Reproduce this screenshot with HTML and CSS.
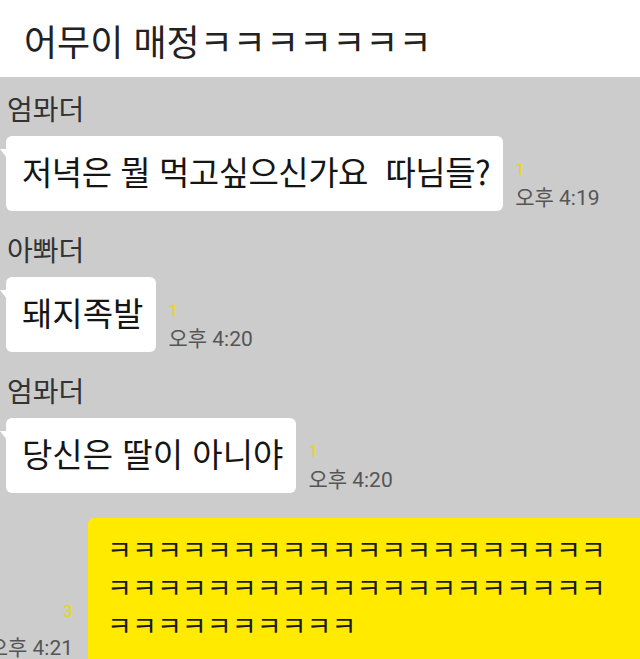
FILE: index.html
```html
<!DOCTYPE html>
<html lang="ko">
<head>
    <meta charset="UTF-8">
    <meta name="viewport" content="width=device-width, initial-scale=1.0">
    <title>어무이 매정</title>
    <link rel="stylesheet" href="styles.css">
</head>
<body>
    <header class="post-header">
        <h1 class="post-title">어무이 매정ㅋㅋㅋㅋㅋㅋㅋ</h1>
    </header>
    <main class="chat">
        <div class="msg-group">
            <div class="sender">엄뫄더</div>
            <div class="msg-row">
                <div class="bubble bubble-long">저녁은 뭘 먹고싶으신가요&nbsp; 따님들?</div>
                <div class="meta">
                    <span class="unread">1</span>
                    <span class="time">오후 4:19</span>
                </div>
            </div>
        </div>
        <div class="msg-group">
            <div class="sender">아뽜더</div>
            <div class="msg-row">
                <div class="bubble">돼지족발</div>
                <div class="meta">
                    <span class="unread">1</span>
                    <span class="time">오후 4:20</span>
                </div>
            </div>
        </div>
        <div class="msg-group">
            <div class="sender">엄뫄더</div>
            <div class="msg-row">
                <div class="bubble">당신은 딸이 아니야</div>
                <div class="meta">
                    <span class="unread">1</span>
                    <span class="time">오후 4:20</span>
                </div>
            </div>
        </div>
        <div class="msg-row msg-row-mine">
            <div class="meta meta-mine">
                <span class="unread">3</span>
                <span class="time">오후 4:21</span>
            </div>
            <div class="bubble-mine">ㅋㅋㅋㅋㅋㅋㅋㅋㅋㅋㅋㅋㅋㅋㅋㅋㅋㅋㅋㅋ<br>ㅋㅋㅋㅋㅋㅋㅋㅋㅋㅋㅋㅋㅋㅋㅋㅋㅋㅋㅋㅋ<br>ㅋㅋㅋㅋㅋㅋㅋㅋㅋㅋ</div>
        </div>
    </main>
</body>
</html>
```

FILE: styles.css
```css
:root {
    --chat-bg: #cccccc;
    --bubble-bg: #ffffff;
    --mine-bg: #ffea00;
    --text-color: #151515;
    --meta-color: #555555;
    --unread-color: #e6d628;
}

* {
    margin: 0;
    padding: 0;
    box-sizing: border-box;
}

body {
    width: 640px;
    height: 659px;
    overflow: hidden;
    background: var(--chat-bg);
    font-family: 'Noto Sans CJK KR', 'Noto Sans', sans-serif;
    color: var(--text-color);
}

.post-header {
    height: 77px;
    background: #ffffff;
    padding: 16px 0 0 24px;
}

.post-title {
    font-size: 36px;
    font-weight: 400;
    line-height: 48px;
    color: #222222;
}

.chat {
    padding-top: 13px;
}

.msg-group {
    margin-bottom: 20px;
}

.sender {
    font-size: 28px;
    line-height: 36px;
    padding-left: 7px;
    margin-bottom: 10px;
    color: #333333;
}

.msg-row {
    display: flex;
    align-items: flex-end;
    gap: 12px;
}

.bubble {
    position: relative;
    margin-left: 6px;
    height: 75px;
    padding: 0 13px 0 16px;
    background: var(--bubble-bg);
    border-radius: 6px;
    font-size: 33px;
    line-height: 71px;
    white-space: nowrap;
}

.bubble-long {
    letter-spacing: -0.5px;
}

/* little tail on the left */
.bubble::before {
    content: '';
    position: absolute;
    left: -6px;
    top: 13px;
    border-top: 9px solid var(--bubble-bg);
    border-left: 7px solid transparent;
}

.meta {
    display: flex;
    flex-direction: column;
    padding-bottom: 2px;
}

.unread {
    font-family: Roboto, sans-serif;
    font-size: 17px;
    line-height: 18px;
    font-weight: 500;
    color: var(--unread-color);
    margin-bottom: 9px;
}

.time {
    font-family: Roboto, 'Noto Sans CJK KR', sans-serif;
    font-size: 21px;
    line-height: 22px;
    color: var(--meta-color);
}

/* margins collapse with the group above, so this is the real gap */
.msg-row-mine {
    justify-content: flex-end;
    margin-top: 25px;
    gap: 15px;
}

.meta-mine {
    align-items: flex-end;
    flex-shrink: 0;
    padding-bottom: 11px;
}

.meta-mine .unread {
    margin-bottom: 17px;
}

.bubble-mine {
    flex-shrink: 0;
    width: 552px;
    height: 152px;
    padding: 12px 0 0 19px;
    background: var(--mine-bg);
    border-radius: 6px 0 0 6px;
    font-size: 27px;
    line-height: 38px;
    letter-spacing: 0.1px;
    color: #1a1a1a;
}
```
